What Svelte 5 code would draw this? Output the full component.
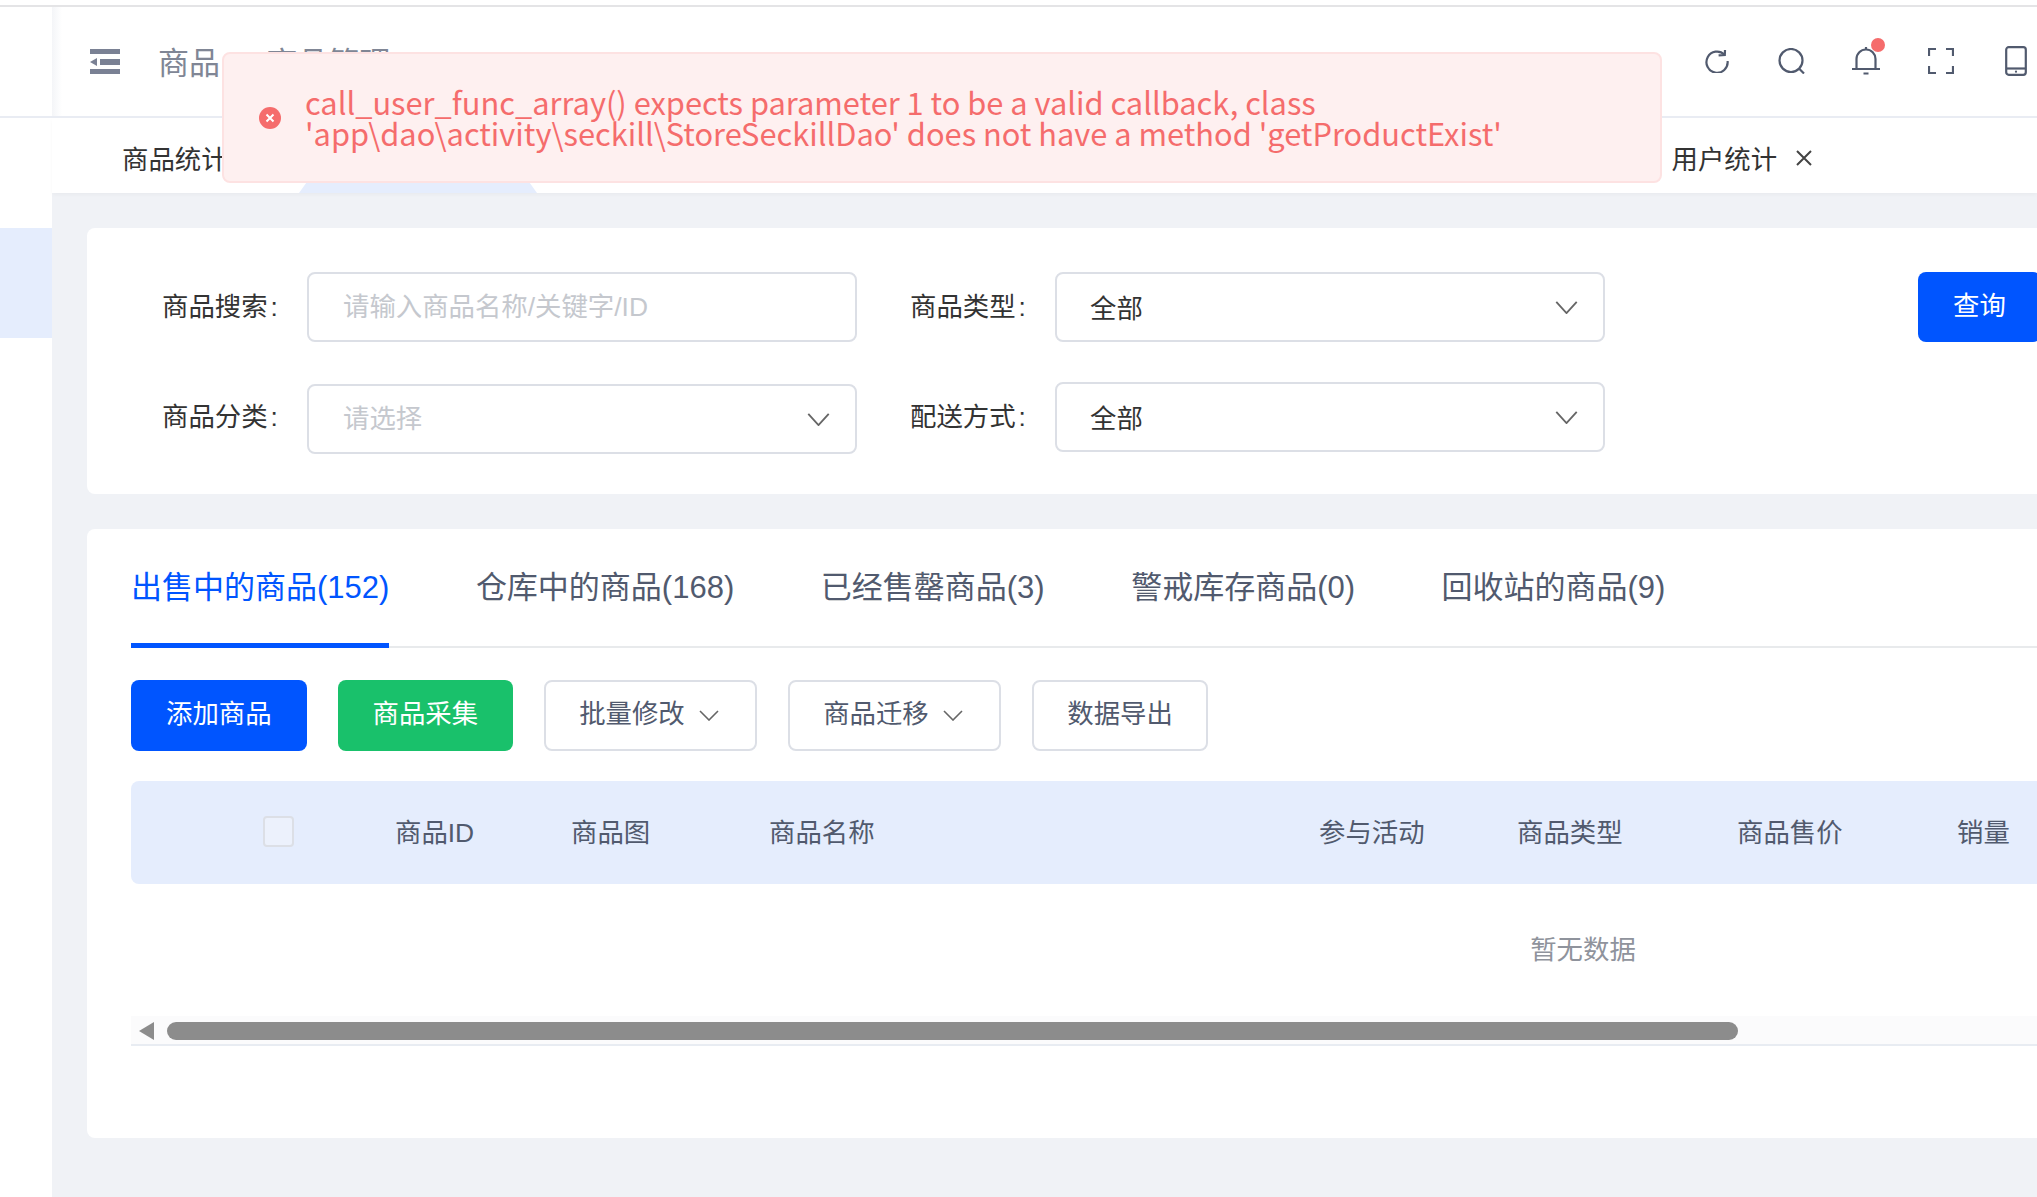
<script>
	const filtersA = [
		{ label: '商品搜索', text: '请输入商品名称/关键字/ID', placeholder: true, arrow: false },
		{ label: '商品分类', text: '请选择', placeholder: true, arrow: true }
	];
	const filtersB = [
		{ label: '商品类型', text: '全部' },
		{ label: '配送方式', text: '全部' }
	];
	const tabs = ['出售中的商品(152)', '仓库中的商品(168)', '已经售罄商品(3)', '警戒库存商品(0)', '回收站的商品(9)'];
	const columns = ['商品ID', '商品图', '商品名称', '参与活动', '商品类型', '商品售价', '销量'];
</script>

{#snippet chevron()}
	<svg class="chevron" viewBox="0 0 24 14" fill="none"><path d="M1 1l11 12L23 1" /></svg>
{/snippet}

<div class="page">
	<div class="topline"></div>
	<div class="shell">
		<aside class="sidebar">
			<div class="side-head"></div>
			<div class="side-active"></div>
		</aside>
		<main class="main">
			<header class="header">
				<svg class="burger" viewBox="0 0 30 25"><path d="M0 0h30v5H0zM10 10h20v6H10zM0 20h30v5H0zM7 9v8l-7-4z" /></svg>
				<span class="crumb first">商品</span>
				<span class="crumb sep">/</span>
				<span class="crumb">商品管理</span>
				<div class="tools">
					<svg viewBox="0 0 24 24" class="t-refresh"><path d="M19.500 5.600A10.600 10.600 0 1 0 22.600 12" /><path d="M13.600 6.400l6.200-.4.200-5" /></svg>
					<svg viewBox="0 0 28 26" class="t-search"><circle cx="13" cy="12.500" r="11.500" /><path d="M21.500 21l4.500 4.500" /></svg>
					<div class="bell-wrap">
						<svg viewBox="0 0 28 28" class="t-bell"><path d="M0 22h28M4.500 22V12a9.500 9.500 0 0 1 19 0v10" /><path d="M14 0v2.500M11.500 26.500h5" /></svg>
						<span class="dot"></span>
					</div>
					<svg viewBox="0 0 26 26" class="t-full"><path d="M1 8V1h7M18 1h7v7M25 18v7h-7M8 25H1v-7" /></svg>
					<svg viewBox="0 0 22 30" class="t-phone"><rect x="1.200" y="1.200" width="19.600" height="27.600" rx="2.500" /><path d="M1.200 22.500h19.600" /><circle class="solid" cx="11" cy="25.700" r="1.100" /></svg>
				</div>
			</header>
			<nav class="pagetabs">
				<span class="pagetab">商品统计</span>
				<span class="pagetab-active"></span>
				<span class="pagetab last">用户统计</span>
				<svg class="close" viewBox="0 0 16 16"><path d="M1 1l14 14M15 1L1 15" /></svg>
			</nav>
			<div class="content">
				<section class="card filters">
					<div class="filter-col col-a">
						{#each filtersA as f}
							<div class="field">
								<span class="label">{f.label}<span class="colon">:</span></span>
								<div class="control" class:muted={f.placeholder}>
									<span>{f.text}</span>
									{#if f.arrow}{@render chevron()}{/if}
								</div>
							</div>
						{/each}
					</div>
					<div class="filter-col col-b">
						{#each filtersB as f}
							<div class="field">
								<span class="label">{f.label}<span class="colon">:</span></span>
								<div class="control value">
									<span>{f.text}</span>
									{@render chevron()}
								</div>
							</div>
						{/each}
					</div>
					<button class="btn primary query">查询</button>
				</section>

				<section class="card list">
					<div class="tabbar">
						{#each tabs as tab, i}
							<span class="tab" class:active={i === 0}>{tab}</span>
						{/each}
					</div>
					<div class="actions">
						<button class="btn primary">添加商品</button>
						<button class="btn green">商品采集</button>
						<button class="btn plain">批量修改<svg class="mini" viewBox="0 0 20 11" fill="none"><path d="M1 1l9 9 9-9" /></svg></button>
						<button class="btn plain">商品迁移<svg class="mini" viewBox="0 0 20 11" fill="none"><path d="M1 1l9 9 9-9" /></svg></button>
						<button class="btn plain">数据导出</button>
					</div>
					<div class="table">
						<div class="thead">
							<span class="checkbox"></span>
							{#each columns as col}
								<span class="th">{col}</span>
							{/each}
						</div>
						<div class="empty">暂无数据</div>
						<div class="scrollbar">
							<span class="arrow"></span>
							<span class="thumb"></span>
						</div>
					</div>
				</section>
			</div>
		</main>
	</div>

	<div class="toast">
		<svg class="toast-icon" viewBox="0 0 22 22"><circle cx="11" cy="11" r="11" /><path d="M7.500 7.500l7 7M14.500 7.500l-7 7" /></svg>
		<p>call_user_func_array() expects parameter 1 to be a valid callback, class<br />'app\dao\activity\seckill\StoreSeckillDao' does not have a method 'getProductExist'</p>
	</div>
</div>

<style>
	:global(body) {
		background: #fff;
	}

	.page {
		position: relative;
		display: flex;
		flex-direction: column;
		width: 2037px;
		height: 1197px;
		overflow: hidden;
		font-family: 'Liberation Sans', 'Noto Sans CJK SC', sans-serif;
		font-size: 26.400px;
		color: #333;
	}

	.topline {
		height: 5px;
		border-bottom: 2px solid #e4e4e6;
		flex: none;
	}

	.shell {
		display: flex;
		flex: 1;
		min-height: 0;
	}

	.sidebar {
		width: 52px;
		flex: none;
		background: #fff;
	}

	.side-head {
		height: 109px;
		border-bottom: 2px solid #e9ecf3;
	}

	.side-active {
		height: 110px;
		margin-top: 110px;
		background: #e5edfd;
	}

	.main {
		flex: 1;
		min-width: 0;
		display: flex;
		flex-direction: column;
		background: #f0f2f6;
	}

	.header {
		display: flex;
		align-items: center;
		height: 109px;
		flex: none;
		padding-left: 38px;
		background: linear-gradient(90deg, #f4f5f8, #fff 10px);
		border-bottom: 2px solid #e9ecf3;
	}

	.burger {
		width: 30px;
		height: 25px;
		fill: #7a8194;
		margin-right: 38px;
	}

	.crumb {
		font-size: 31px;
		color: #808695;
		padding-bottom: 3px;
	}

	.sep {
		margin: 0 20px 0 21px;
		font-size: 20px;
	}

	.tools {
		margin-left: auto;
		display: flex;
		align-items: center;
		padding: 0 10px 2px 0;
	}

	.tools svg {
		fill: none;
		stroke: #515a6e;
		stroke-width: 2.200;
		flex: none;
	}

	.tools .solid {
		fill: #515a6e;
		stroke: none;
	}

	.t-refresh {
		width: 24px;
		height: 24px;
		margin-right: 49px;
	}

	.t-search {
		width: 28px;
		height: 26px;
		margin-right: 46px;
	}

	.bell-wrap {
		position: relative;
		display: flex;
		width: 28px;
		height: 28px;
		margin-right: 48px;
	}

	.t-bell {
		width: 28px;
		height: 28px;
	}

	.dot {
		position: absolute;
		top: -9px;
		left: 19px;
		width: 14px;
		height: 14px;
		border-radius: 50%;
		background: #f56c6c;
	}

	.t-full {
		width: 26px;
		height: 26px;
		margin-right: 51px;
	}

	.t-phone {
		width: 22px;
		height: 30px;
	}

	.pagetabs {
		position: relative;
		display: flex;
		align-items: center;
		height: 75px;
		flex: none;
		padding: 3px 0 0 70px;
		box-sizing: border-box;
		background: #fff;
		box-shadow: 0 2px 4px rgba(0, 0, 0, 0.03);
		z-index: 1;
	}

	.pagetab {
		color: #333;
	}

	.pagetab-active {
		position: absolute;
		left: 247px;
		bottom: 0;
		width: 238px;
		height: 14px;
		background: #e5edfd;
		clip-path: polygon(10px 0, 228px 0, 100% 100%, 0 100%);
	}

	.last {
		margin-left: 1444px;
	}

	.close {
		width: 16px;
		height: 16px;
		margin: 2px 0 0 19px;
		stroke: #444;
		stroke-width: 2;
		fill: none;
	}

	.content {
		flex: 1;
		min-height: 0;
		overflow: hidden;
		padding: 35px 0 0 35px;
		display: flex;
		flex-direction: column;
		gap: 35px;
	}

	.card {
		width: 2000px;
		flex: none;
		background: #fff;
		border-radius: 8px;
		box-sizing: border-box;
	}

	.filters {
		display: flex;
		align-items: flex-start;
		height: 266px;
		padding: 44px 0 0 75px;
	}

	.filter-col {
		display: flex;
		flex-direction: column;
		gap: 42px;
	}

	.col-b {
		margin-left: 53px;
		gap: 40px;
	}

	.field {
		display: flex;
		align-items: center;
	}

	.label {
		width: 145px;
		flex: none;
		color: #333;
		white-space: nowrap;
		padding-bottom: 6px;
	}

	.col-a .field:last-child .label {
		padding-bottom: 10px;
	}

	.colon {
		margin-left: 3px;
	}

	.control {
		display: flex;
		align-items: center;
		justify-content: space-between;
		width: 550px;
		height: 70px;
		padding: 0 25px 0 34px;
		box-sizing: border-box;
		border: 2px solid #dcdfe6;
		border-radius: 8px;
		background: #fff;
	}

	.control span {
		padding-bottom: 6px;
	}

	.muted {
		color: #c5c8ce;
	}

	.value span {
		padding-bottom: 2px;
		margin-left: -1px;
		color: #333;
	}

	.chevron {
		width: 23px;
		height: 13px;
		stroke: #666;
		stroke-width: 2;
	}

	.btn {
		height: 71px;
		padding: 0 35px 8px;
		border: 0;
		border-radius: 8px;
		font: inherit;
		white-space: nowrap;
		flex: none;
	}

	.primary {
		background: #0055ff;
		color: #fff;
	}

	.green {
		background: #19c16b;
		color: #fff;
	}

	.plain {
		padding: 0 33px 8px;
		background: #fff;
		color: #515a6e;
		border: 2px solid #dcdfe6;
		display: inline-flex;
		align-items: center;
	}

	.query {
		height: 70px;
		margin-left: 313px;
	}

	.mini {
		width: 20px;
		height: 11px;
		margin: 7px 3.500px 0 14px;
		stroke: #666;
		stroke-width: 1.600;
	}

	.list {
		height: 609px;
		padding-left: 44px;
		overflow: hidden;
	}

	.tabbar {
		display: flex;
		gap: 86.500px;
		height: 119px;
		border-bottom: 2px solid #e8eaec;
		box-sizing: border-box;
		margin-right: -60px;
	}

	.tab {
		font-size: 31px;
		line-height: 118px;
		color: #515a6e;
		height: 119px;
		box-sizing: border-box;
		white-space: nowrap;
	}

	.active {
		color: #0055ff;
		border-bottom: 5px solid #0055ff;
	}

	.actions {
		display: flex;
		gap: 31px;
		margin-top: 32px;
	}

	.table {
		width: 2904px;
		margin-top: 30px;
	}

	.thead {
		display: grid;
		grid-template-columns: 132px 176px 198px 550px 198px 220px 220px 100px;
		align-items: center;
		height: 103px;
		padding-left: 132px;
		background: #e5edfd;
		border-radius: 8px;
		color: #515a6e;
	}

	.th {
		padding-bottom: 5px;
	}

	.checkbox {
		width: 31px;
		height: 31px;
		margin-top: -3px;
		box-sizing: border-box;
		border: 2px solid #dcdfe6;
		border-radius: 4px;
		background: #ecf1fc;
	}

	.empty {
		height: 132px;
		line-height: 132px;
		text-align: center;
		color: #8f939c;
	}

	.scrollbar {
		display: flex;
		align-items: center;
		height: 30px;
		padding-top: 2px;
		box-sizing: border-box;
		background: #fbfbfc;
		border-bottom: 2px solid #e8ecf2;
	}

	.arrow {
		width: 0;
		height: 0;
		margin-left: 8px;
		border-style: solid;
		border-width: 9px 15px 9px 0;
		border-color: transparent #8c8c8c transparent transparent;
	}

	.thumb {
		width: 1571px;
		height: 18px;
		margin-left: 13px;
		border-radius: 9px;
		background: #8c8c8c;
	}

	.toast {
		position: absolute;
		left: 222px;
		top: 52px;
		width: 1440px;
		height: 131px;
		box-sizing: border-box;
		display: flex;
		align-items: center;
		padding-left: 35px;
		background: #fef0f0;
		border: 2px solid #fde2e2;
		border-radius: 8px;
		z-index: 5;
	}

	.toast-icon {
		width: 22px;
		height: 22px;
		flex: none;
		margin-right: 24px;
		fill: #f56c6c;
		stroke: #fff;
		stroke-width: 2;
	}

	.toast-icon circle {
		stroke: none;
	}

	.toast p {
		margin: 0 0 2px;
		font-family: 'Noto Sans CJK SC', sans-serif;
		font-size: 30.800px;
		line-height: 31px;
		color: #f56c6c;
		white-space: nowrap;
	}
</style>
